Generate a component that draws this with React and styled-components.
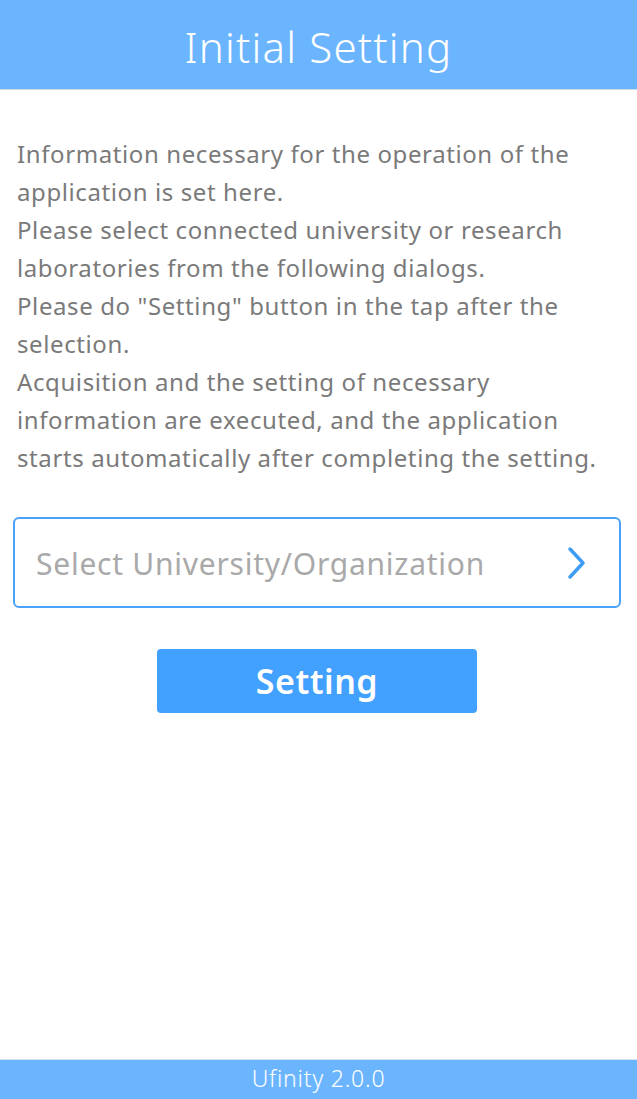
import React from "react";
import styled, { createGlobalStyle } from "styled-components";

const GlobalStyle = createGlobalStyle`
  html, body {
    margin: 0;
    padding: 0;
    background: #fff;
  }
  body {
    font-family: "Noto Sans", "Open Sans", sans-serif;
  }
`;

const Page = styled.div`
  display: flex;
  flex-direction: column;
  height: 1099px;
  width: 637px;
`;

const Header = styled.header`
  height: 90px;
  background-color: #6bb5ff;
  border-bottom: 1px solid #cfd8e0;
  display: flex;
  align-items: center;
  justify-content: center;
  color: #fff;
  font-size: 42px;
  font-weight: 300;
  letter-spacing: 1.2px;
  padding-top: 4px;
  box-sizing: border-box;
`;

const Content = styled.main`
  flex: 1;
  padding: 45px 13px 0 16px;
`;

const Intro = styled.div`
  color: #7a7a7a;
  font-size: 24px;
  line-height: 38px;
  letter-spacing: 0.6px;
  padding-left: 1px;
`;

const Line = styled.div`
  white-space: nowrap;
`;

const Select = styled.div`
  margin-top: 40px;
  margin-left: -3px;
  width: 551px;
  height: 87px;
  border: 2px solid #4aa2f8;
  border-radius: 6px;
  display: flex;
  align-items: center;
  justify-content: space-between;
  padding: 0 32px 0 21px;
`;

const Placeholder = styled.span`
  color: #a9a9a9;
  font-size: 30px;
  letter-spacing: 0.75px;
  padding-top: 2px;
`;

const Chevron = styled.svg`
  width: 20px;
  height: 34px;
`;

const ButtonRow = styled.div`
  display: flex;
  justify-content: center;
  margin-top: 41px;
`;

const Button = styled.button`
  width: 320px;
  height: 64px;
  border: none;
  border-radius: 4px;
  background-color: #42a0ff;
  color: #fff;
  font-family: "Noto Sans", sans-serif;
  font-size: 34px;
  font-weight: 600;
  letter-spacing: 0.5px;
  margin-right: 6px;
`;

const Footer = styled.footer`
  height: 39px;
  background-color: #6bb5ff;
  border-top: 1px solid #d5e3f0;
  display: flex;
  align-items: center;
  justify-content: center;
  color: #fff;
  font-size: 23px;
  font-weight: 300;
  letter-spacing: 0.8px;
  padding-bottom: 4px;
  box-sizing: content-box;
  height: 35px;
`;

const lines = [
  "Information necessary for the operation of the",
  "application is set here.",
  "Please select connected university or research",
  "laboratories from the following dialogs.",
  'Please do "Setting" button in the tap after the',
  "selection.",
  "Acquisition and the setting of necessary",
  "information are executed, and the application",
  "starts automatically after completing the setting.",
];

export default function App() {
  return (
    <>
      <GlobalStyle />
      <Page>
        <Header>Initial Setting</Header>
        <Content>
          <Intro>
            {lines.map((l) => (
              <Line key={l}>{l}</Line>
            ))}
          </Intro>
          <Select>
            <Placeholder>Select University/Organization</Placeholder>
            <Chevron viewBox="0 0 20 34">
              <path
                d="M3 3 L16 17 L3 31"
                fill="none"
                stroke="#3d9df5"
                strokeWidth="3.5"
                strokeLinecap="round"
                strokeLinejoin="round"
              />
            </Chevron>
          </Select>
          <ButtonRow>
            <Button>Setting</Button>
          </ButtonRow>
        </Content>
        <Footer>Ufinity 2.0.0</Footer>
      </Page>
    </>
  );
}
